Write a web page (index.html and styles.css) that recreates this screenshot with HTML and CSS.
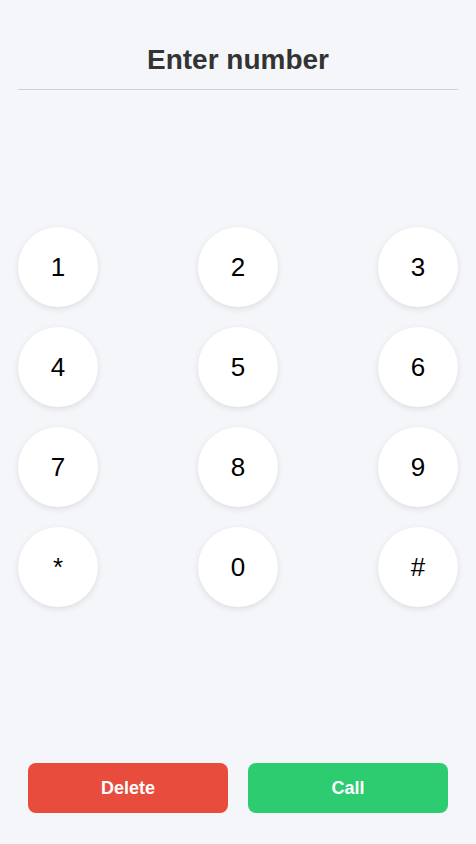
FILE: index.html
```html
<!DOCTYPE html>
<html lang="en">
<head>
<meta charset="utf-8">
<title>Dialer</title>
<link rel="stylesheet" href="styles.css">
</head>
<body>
<div class="app">
  <header class="header">
    <h1 class="title">Enter number</h1>
  </header>
  <div class="keypad">
    <button class="key">1</button>
    <button class="key">2</button>
    <button class="key">3</button>
    <button class="key">4</button>
    <button class="key">5</button>
    <button class="key">6</button>
    <button class="key">7</button>
    <button class="key">8</button>
    <button class="key">9</button>
    <button class="key">*</button>
    <button class="key">0</button>
    <button class="key">#</button>
  </div>
  <div class="actions">
    <button class="action action-delete">Delete</button>
    <button class="action action-call">Call</button>
  </div>
</div>
</body>
</html>
```

FILE: styles.css
```css
html, body {
  margin: 0;
  padding: 0;
}
body {
  background: #f5f6fa;
  font-family: "Liberation Sans", Arial, sans-serif;
}
.app {
  box-sizing: border-box;
  height: 844px;
  padding: 0 18px;
  display: flex;
  flex-direction: column;
}
.header {
  margin-top: 44px;
  padding-bottom: 13px;
  border-bottom: 1px solid #cfd0d4;
  text-align: center;
}
.title {
  margin: 0;
  font-size: 28px;
  line-height: 32px;
  font-weight: bold;
  color: #333333;
}
.keypad {
  margin-top: 137px;
  display: grid;
  grid-template-columns: repeat(3, 80px);
  justify-content: space-between;
  row-gap: 20px;
}
.key {
  width: 80px;
  height: 80px;
  border: none;
  border-radius: 50%;
  background: #ffffff;
  box-shadow: 0 2px 6px rgba(0, 0, 0, 0.1);
  font-family: "Liberation Sans", Arial, sans-serif;
  font-size: 26px;
  color: #000000;
  padding: 0;
}
.actions {
  margin-top: auto;
  margin-bottom: 31px;
  padding: 0 10px;
  display: flex;
  gap: 20px;
}
.action {
  flex: 1;
  height: 50px;
  border: none;
  border-radius: 8px;
  color: #ffffff;
  font-family: "Liberation Sans", Arial, sans-serif;
  font-size: 18px;
  font-weight: bold;
}
.action-delete {
  background: #e74c3c;
}
.action-call {
  background: #2ecc71;
}
```
